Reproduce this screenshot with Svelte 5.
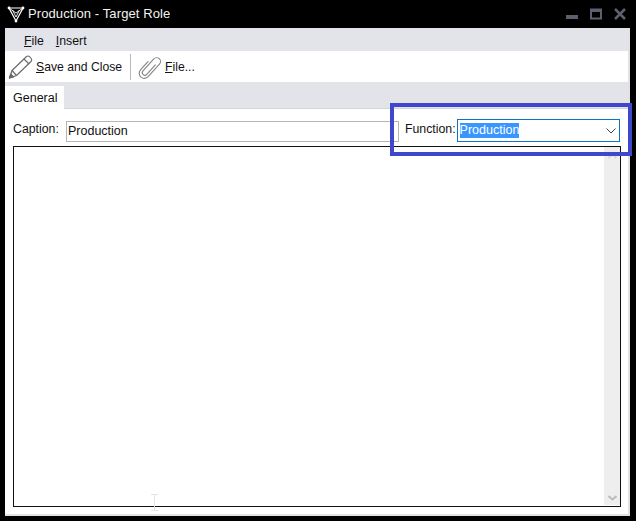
<script lang="ts">
	const menus = [
		{ key: "F", rest: "ile" },
		{ key: "I", rest: "nsert" },
	];
</script>

<div class="window">
	<header class="titlebar">
		<svg class="logo" width="20" height="20" viewBox="0 0 20 20" fill="none" stroke="#fff">
			<path d="M3 5 L17 5 L10 18 Z" stroke-width="1.2" />
			<path d="M6.5 7 L10 14 M13.5 7 L10 14 M3 5 L10 10 L17 5" stroke-width="0.9" />
			<circle cx="3" cy="5" r="1.4" fill="#fff" stroke="none" />
			<circle cx="17" cy="5" r="1.4" fill="#fff" stroke="none" />
			<circle cx="10" cy="18" r="1.4" fill="#fff" stroke="none" />
		</svg>
		<span class="title">Production - Target Role</span>
		<div class="controls">
			<svg width="12" height="12" viewBox="0 0 12 12"><rect x="0" y="7" width="12" height="4" fill="#5c5f6e" /></svg>
			<svg width="12" height="12" viewBox="0 0 12 12" fill="none" stroke="#5c5f6e" stroke-width="2"><rect x="1" y="1.5" width="10" height="9" /><path d="M1 2.5h10" stroke-width="3" /></svg>
			<svg width="12" height="12" viewBox="0 0 12 12" fill="none" stroke="#5c5f6e" stroke-width="2.6"><path d="M1 1 L11 11 M11 1 L1 11" /></svg>
		</div>
	</header>

	<div class="body">
		<nav class="menubar">
			{#each menus as m}
				<span><u>{m.key}</u>{m.rest}</span>
			{/each}
		</nav>

		<div class="toolbar">
			<button class="tool">
				<svg width="26" height="26" viewBox="0 0 26 26" fill="none" stroke="#6b6b6b" stroke-width="1.2" stroke-linejoin="round">
					<path d="M2.5 24 L5 16.5 L19.5 2.5 Q21 1.5 22.5 2.5 L24.5 5 Q25 6.5 24 7.5 L9.5 21.5 Z" />
					<path d="M5 16.5 L9.5 21.5 M17 5 L22 10" />
					<path d="M2.5 24 L3.7 20 L6.5 23 Z" fill="#6b6b6b" />
				</svg>
				<span><u>S</u>ave and Close</span>
			</button>
			<div class="divider"></div>
			<button class="tool file">
				<svg width="24" height="26" viewBox="0 0 24 26" fill="none" stroke="#858585" stroke-width="1.3" stroke-linecap="round">
					<g transform="translate(12 13) rotate(42) scale(0.85)">
						<path d="M3 -6 V9 a3 3 0 0 1 -6 0 V-10 a4.5 4.5 0 0 1 9 0 V10 a6 6 0 0 1 -12 0 V-3" />
					</g>
				</svg>
				<span><u>F</u>ile...</span>
			</button>
		</div>

		<div class="tabstrip">
			<div class="tab">General</div>
		</div>

		<section class="content">
			<div class="fields">
				<label class="caption">
					<span>Caption:</span>
					<input type="text" value="Production" />
				</label>
				<div class="function">
					<span>Function:</span>
					<div class="select">
						<span class="selected">Production</span>
						<svg width="10" height="6" viewBox="0 0 10 6" fill="none" stroke="#444" stroke-width="1"><path d="M0.5 0.5 L5 5 L9.5 0.5" /></svg>
					</div>
				</div>
			</div>

			<div class="editor">
				<div class="editor-area"></div>
				<div class="scrollbar">
					<svg width="9" height="6" viewBox="0 0 9 6" fill="none" stroke="#d8d8d8" stroke-width="2"><path d="M0.5 5 L4.5 1.5 L8.5 5" /></svg>
					<svg width="9" height="6" viewBox="0 0 9 6" fill="none" stroke="#bcbcbc" stroke-width="2"><path d="M0.5 1 L4.5 4.5 L8.5 1" /></svg>
				</div>
			</div>
		</section>
	</div>

	<div class="highlight"></div>
	<svg class="cursor" width="7" height="17" viewBox="0 0 7 17" fill="none" stroke="#e4e4e4"><path d="M0 .5h7M0 16.5h7M3.5 .5v16" /></svg>
</div>

<style>
	:global(body) {
		margin: 0;
		background: #000;
	}

	.window {
		position: relative;
		width: 636px;
		height: 521px;
		background: #000;
		overflow: hidden;
		font-family: "Liberation Sans", Arial, sans-serif;
		font-size: 12.3px;
		color: #111;
	}

	.titlebar {
		height: 28px;
		display: flex;
		align-items: center;
		box-sizing: border-box;
		padding: 0 10px 1px 6px;
		color: #fff;
	}

	.logo {
		margin-top: -1px;
	}

	.title {
		margin-left: 2px;
		font-size: 13px;
		letter-spacing: 0.1px;
		color: #f2f2f2;
	}

	.controls {
		margin-left: auto;
		display: flex;
		gap: 12px;
		margin-top: 1px;
	}

	.body {
		margin-left: 5px;
		width: 625px;
		height: 488px;
		box-sizing: border-box;
		background: #fff;
		border-right: 2px solid #e2e2e2;
		border-bottom: 2px solid #e2e2e2;
		display: flex;
		flex-direction: column;
	}

	.menubar {
		height: 23px;
		box-sizing: border-box;
		padding: 2px 0 0 19px;
		background: #e3e4ea;
		display: flex;
		align-items: center;
		gap: 12px;
		font-size: 12.3px;
	}

	.toolbar {
		height: 31px;
		display: flex;
		align-items: center;
		background: #fff;
	}

	.tool {
		all: unset;
		display: flex;
		align-items: center;
		gap: 3px;
		padding-left: 2px;
		font-size: 12.2px;
	}

	.tool.file {
		padding-left: 7px;
		gap: 3px;
	}

	.divider {
		width: 1px;
		height: 26px;
		background: #b8b8b8;
		margin-left: 8px;
	}

	.tabstrip {
		height: 27px;
		box-sizing: border-box;
		background: #e3e4ea;
		border-bottom: 1px solid #d4d4da;
		display: flex;
		align-items: flex-end;
	}

	.tab {
		width: 59px;
		height: 23px;
		box-sizing: border-box;
		background: #fff;
		margin-bottom: -1px;
		padding: 5px 0 0 8px;
		font-size: 12.5px;
	}

	.content {
		flex: 1;
		display: flex;
		flex-direction: column;
		padding: 10px 8px 7px 8px;
		min-height: 0;
	}

	.fields {
		display: flex;
		height: 27px;
	}

	.caption {
		display: flex;
		align-items: flex-start;
		gap: 6px;
		height: 22px;
		margin-top: 1px;
	}

	.caption > span {
		line-height: 18px;
		width: 47px;
	}

	.caption input {
		width: 333px;
		height: 21px;
		box-sizing: border-box;
		border: 1px solid #b5b5b5;
		margin: 1px 0 0;
		padding: 0 1px 1px 1px;
		font: inherit;
		font-size: 12.5px;
		color: #111;
		outline: none;
	}

	.function {
		display: flex;
		align-items: flex-start;
		margin-left: 6px;
		gap: 1px;
	}

	.function > span {
		line-height: 21px;
	}

	.select {
		width: 163px;
		height: 23px;
		box-sizing: border-box;
		border: 1px solid #0f72c4;
		display: flex;
		align-items: center;
		justify-content: space-between;
		padding: 0 3px 0 2px;
	}

	.selected {
		background: #3a96ff;
		color: #fff;
		padding: 0;
		line-height: 15px;
		font-size: 12.5px;
	}

	.select svg {
		margin-top: 1px;
	}

	.editor {
		flex: 1;
		width: 608px;
		box-sizing: border-box;
		border: 1px solid #111;
		display: flex;
		min-height: 0;
	}

	.editor-area {
		flex: 1;
	}

	.scrollbar {
		width: 16px;
		background: #eee;
		display: flex;
		flex-direction: column;
		align-items: center;
		justify-content: space-between;
		padding: 6px 0 4px;
		margin: 0 0 1px;
	}

	.highlight {
		position: absolute;
		left: 390px;
		top: 103px;
		width: 242px;
		height: 53px;
		box-sizing: border-box;
		border: 4px solid #3f48cc;
	}

	.cursor {
		position: absolute;
		left: 151px;
		top: 494px;
	}
</style>
